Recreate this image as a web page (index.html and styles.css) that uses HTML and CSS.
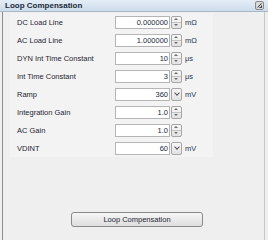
FILE: index.html
```html
<!DOCTYPE html>
<html lang="en">
<head>
<meta charset="UTF-8">
<meta name="viewport" content="width=device-width, initial-scale=1.0">
<title>Loop Compensation</title>
<link rel="stylesheet" href="styles.css">
</head>
<body>
    <div class="panel">
        <div class="titlebar">
            <span class="title">Loop Compensation</span>
            <span class="pin">
                <svg width="9" height="9" viewBox="0 0 9 9">
                    <rect x="0.5" y="0.5" width="8" height="8" rx="1.5" fill="#d8d8d8" stroke="#8a8a8a"/>
                    <path d="M2.5 6.5 L6.5 2.5 M4.5 6.5 H6.5 V4.5" stroke="#333" fill="none"/>
                </svg>
            </span>
        </div>
        <div class="content">
            <div class="rows">
                <div class="row">
                    <label class="label">DC Load Line</label>
                    <div class="field">0.000000</div>
                    <div class="spin"><span class="up"></span><span class="down"></span></div>
                    <span class="unit">mΩ</span>
                </div>
                <div class="row">
                    <label class="label">AC Load Line</label>
                    <div class="field">1.000000</div>
                    <div class="spin"><span class="up"></span><span class="down"></span></div>
                    <span class="unit">mΩ</span>
                </div>
                <div class="row">
                    <label class="label">DYN Int Time Constant</label>
                    <div class="field">10</div>
                    <div class="spin"><span class="up"></span><span class="down"></span></div>
                    <span class="unit">μs</span>
                </div>
                <div class="row">
                    <label class="label">Int Time Constant</label>
                    <div class="field">3</div>
                    <div class="spin"><span class="up"></span><span class="down"></span></div>
                    <span class="unit">μs</span>
                </div>
                <div class="row">
                    <label class="label">Ramp</label>
                    <div class="field">360</div>
                    <div class="drop"></div>
                    <span class="unit">mV</span>
                </div>
                <div class="row">
                    <label class="label">Integration Gain</label>
                    <div class="field">1.0</div>
                    <div class="spin"><span class="up"></span><span class="down"></span></div>
                </div>
                <div class="row">
                    <label class="label">AC Gain</label>
                    <div class="field">1.0</div>
                    <div class="spin"><span class="up"></span><span class="down"></span></div>
                </div>
                <div class="row">
                    <label class="label">VDINT</label>
                    <div class="field">60</div>
                    <div class="drop"></div>
                    <span class="unit">mV</span>
                </div>
            </div>
            <div class="actions">
                <button class="action-button">Loop Compensation</button>
            </div>
        </div>
    </div>
</body>
</html>
```

FILE: styles.css
```css
body {
    margin: 0;
    font-family: "Liberation Sans", Arial, sans-serif;
    background-color: #efefef;
}

.panel {
    width: 268px;
    height: 240px;
    display: flex;
    flex-direction: column;
}

.titlebar {
    height: 11px;
    display: flex;
    justify-content: space-between;
    align-items: center;
    padding: 0 4px 0 5px;
    background: linear-gradient(#e4edf7, #cddcec);
    border-bottom: 1px solid #a9b8c8;
}

.title {
    font-size: 8px;
    font-weight: bold;
    color: #1d2a3a;
}

.pin {
    display: flex;
}

.content {
    flex: 1;
    margin: 0 3px 0 2px;
    border-left: 1px solid #8c8c8c;
    border-right: 1px solid #c8c8c8;
    display: flex;
    flex-direction: column;
}

.rows {
    margin: 1px 0 0 7px;
    width: 203px;
    background-color: #f3f3f3;
}

.row {
    height: 18px;
    display: flex;
    align-items: center;
}

.label {
    width: 98px;
    padding-left: 7px;
    font-size: 7.5px;
    color: #1f2430;
}

.field {
    width: 52px;
    height: 11px;
    border: 1px solid #b5b5b5;
    background-color: #fff;
    font-size: 7.5px;
    line-height: 11px;
    text-align: right;
    padding-right: 1px;
    color: #222a3a;
}

.spin {
    width: 9px;
    height: 11px;
    margin-left: 1px;
    border: 1px solid #a6a6a6;
    border-radius: 2px;
    display: flex;
    flex-direction: column;
    background: linear-gradient(#f8f8f8, #e2e2e2);
}

.up,
.down {
    flex: 1;
    position: relative;
}

.up {
    border-bottom: 1px solid #c2c2c2;
}

.up::after,
.down::after {
    content: "";
    position: absolute;
    left: 2px;
    width: 0;
    height: 0;
    border-left: 2.5px solid transparent;
    border-right: 2.5px solid transparent;
}

.up::after {
    top: 1px;
    border-bottom: 2.5px solid #6a6a6a;
}

.down::after {
    top: 1px;
    border-top: 2.5px solid #6a6a6a;
}

.drop {
    width: 9px;
    height: 11px;
    margin-left: 1px;
    border: 1px solid #a6a6a6;
    border-radius: 2px;
    background: linear-gradient(#f8f8f8, #e2e2e2);
    position: relative;
}

.drop::after {
    content: "";
    position: absolute;
    left: 2.5px;
    top: 2px;
    width: 3px;
    height: 3px;
    border-right: 1px solid #555;
    border-bottom: 1px solid #555;
    transform: rotate(45deg);
}

.unit {
    margin-left: 3px;
    font-size: 7.5px;
    color: #2a3550;
}

.actions {
    margin-top: auto;
    margin-bottom: 13px;
    display: flex;
    justify-content: center;
    padding-left: 7px;
}

.action-button {
    width: 132px;
    height: 15px;
    padding: 0;
    font-family: "Liberation Sans", Arial, sans-serif;
    font-size: 7.5px;
    color: #1f2430;
    border: 1px solid #8a8a8a;
    border-radius: 3px;
    background: linear-gradient(#f6f6f6, #dedede);
}
```
